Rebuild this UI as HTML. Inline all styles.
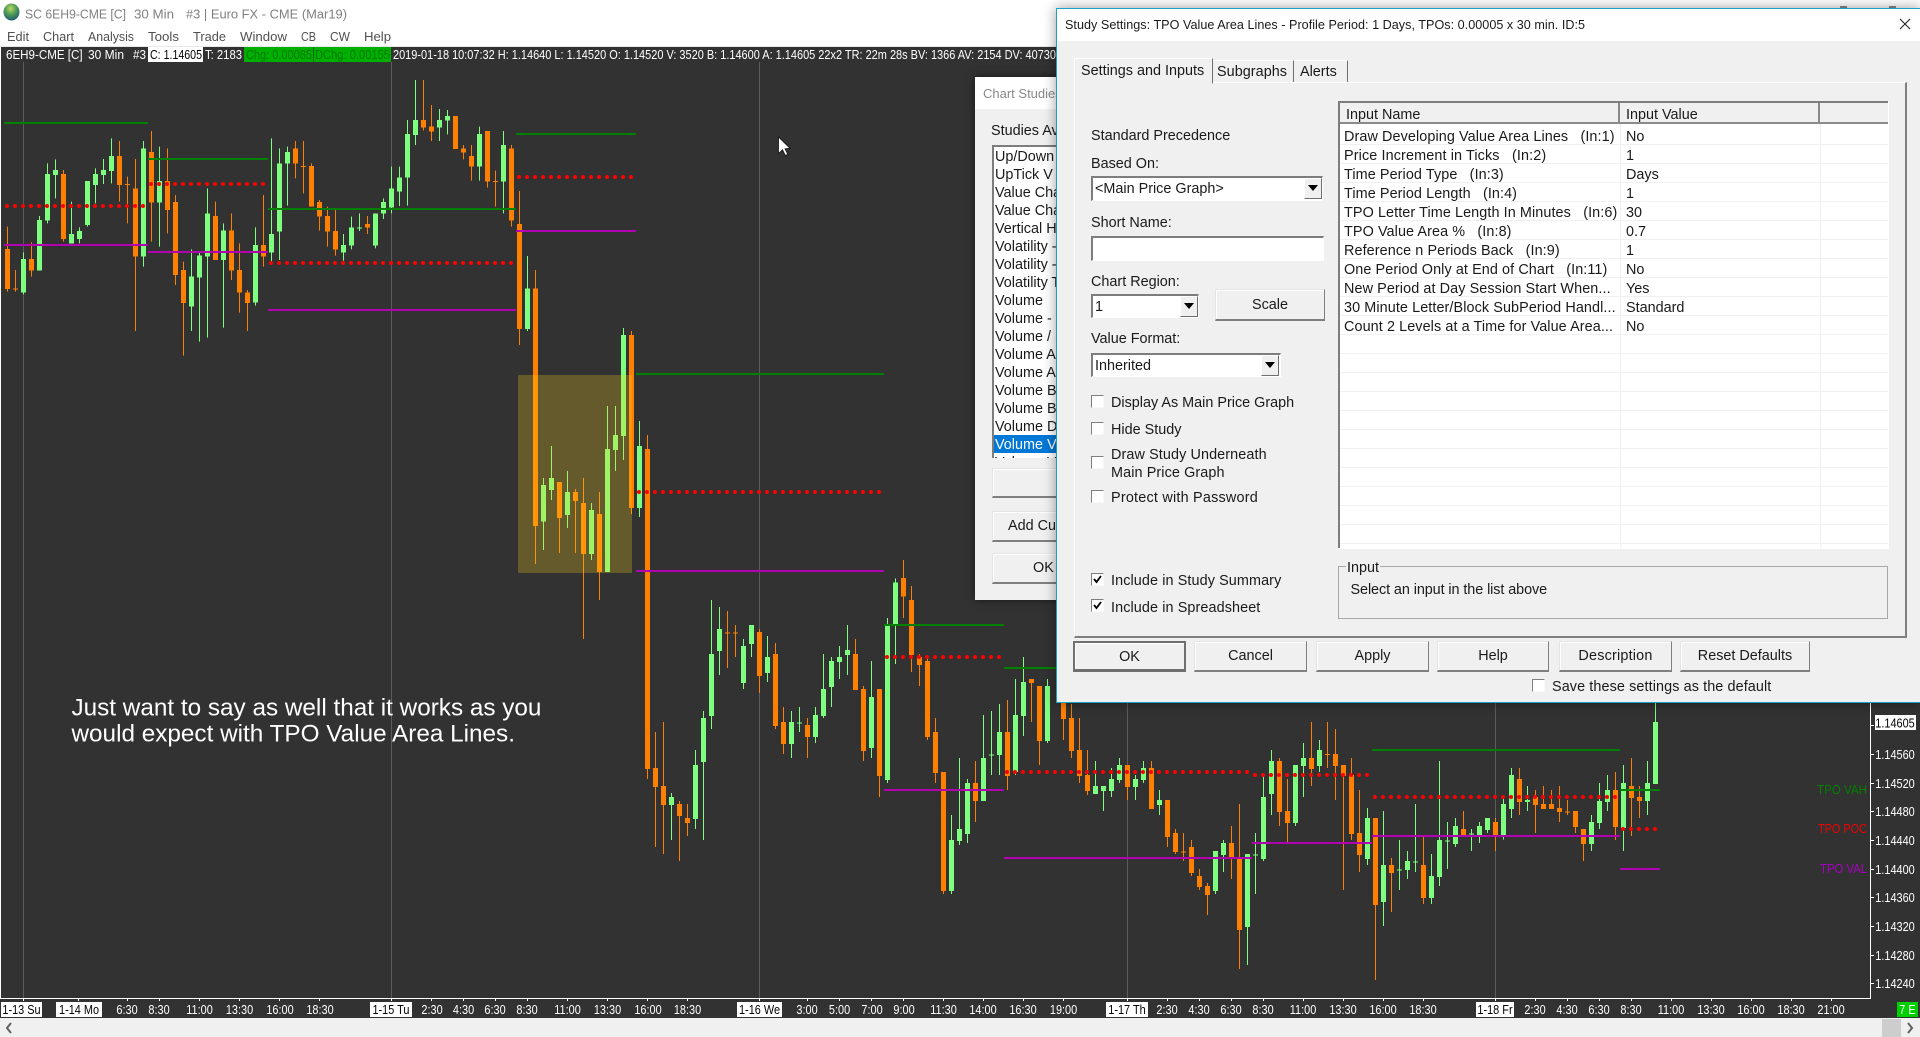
<!DOCTYPE html>
<html><head><meta charset="utf-8"><title>Study Settings</title>
<style>
html,body{margin:0;padding:0;width:1920px;height:1037px;overflow:hidden;background:#fff;font-family:"Liberation Sans",Arial,sans-serif}
svg{position:absolute;left:0;top:0}
svg text{font-family:"Liberation Sans",Arial,sans-serif;font-size:13px;white-space:pre}
.t{fill:#fff;text-anchor:middle;transform-box:fill-box;transform-origin:center;transform:scaleX(.84)}
.k{fill:#000}
.a{position:absolute;white-space:nowrap;font-size:14.4px;line-height:16px;color:#1a1a1a;margin-top:1px}
.r{letter-spacing:.09px}
.b{position:absolute;box-sizing:border-box}
.btn{position:absolute;box-sizing:border-box;background:#f0f0f0;border:1px solid;border-color:#e4e4e4 #7f7f7f #7f7f7f #e4e4e4;border-bottom-width:2px;text-align:center;font-size:14.4px;color:#1a1a1a;line-height:29px;box-shadow:inset 1px 1px 0 #fff}
.in{position:absolute;box-sizing:border-box;background:#fff;border-style:solid;border-width:2px 1px 1px 2px;border-color:#7d7d7d #fff #fff #7d7d7d;font-size:14.4px;line-height:22px;padding-left:2px;color:#1a1a1a}
.dd{position:absolute;box-sizing:border-box;background:#f0f0f0;border:1px solid;border-color:#fff #6f6f6f #6f6f6f #fff;width:18px;height:21px}
.dd:after{content:"";position:absolute;left:3px;top:6px;border:5px solid transparent;border-top:6px solid #000;border-bottom:0}
.cb{position:absolute;box-sizing:border-box;width:13px;height:13px;background:#fff;border-style:solid;border-width:1px;border-color:#7f7f7f #f8f8f8 #f8f8f8 #7f7f7f}
.li{position:absolute;left:1px;margin-top:1px;white-space:nowrap;font-size:14.4px;line-height:18px;color:#1a1a1a}
</style></head><body>
<svg width="1920" height="1037" viewBox="0 0 1920 1037">
<rect width="1920" height="1037" fill="#fff"/>
<rect x="0" y="46" width="1920" height="1" fill="#e8e8e8"/>
<rect x="0" y="47" width="1920" height="971" fill="#323232"/>
<rect x="0" y="47" width="1" height="952" fill="#fff"/>
<rect x="0" y="1018" width="1920" height="19" fill="#f0f0f0"/>
<defs><radialGradient id="g" cx=".45" cy=".3" r=".8"><stop offset="0" stop-color="#b8d860"/><stop offset=".45" stop-color="#4e9a58"/><stop offset="1" stop-color="#124a78"/></radialGradient></defs>
<ellipse cx="11.5" cy="12" rx="8" ry="8.5" fill="url(#g)"/>
<g fill="#808080">
<text x="25" y="18.5" textLength="101" lengthAdjust="spacingAndGlyphs">SC 6EH9-CME [C]</text>
<text x="134" y="18.5" textLength="40" lengthAdjust="spacingAndGlyphs">30 Min</text>
<text x="186" y="18.5" textLength="161" lengthAdjust="spacingAndGlyphs">#3 | Euro FX - CME (Mar19)</text>
</g>
<g fill="#505050">
<text x="7" y="41" textLength="22" lengthAdjust="spacingAndGlyphs">Edit</text>
<text x="43" y="41" textLength="31" lengthAdjust="spacingAndGlyphs">Chart</text>
<text x="88" y="41" textLength="46" lengthAdjust="spacingAndGlyphs">Analysis</text>
<text x="148" y="41" textLength="31" lengthAdjust="spacingAndGlyphs">Tools</text>
<text x="193" y="41" textLength="33" lengthAdjust="spacingAndGlyphs">Trade</text>
<text x="240" y="41" textLength="47" lengthAdjust="spacingAndGlyphs">Window</text>
<text x="301" y="41" textLength="15" lengthAdjust="spacingAndGlyphs">CB</text>
<text x="330" y="41" textLength="20" lengthAdjust="spacingAndGlyphs">CW</text>
<text x="364" y="41" textLength="27" lengthAdjust="spacingAndGlyphs">Help</text>
</g>
<rect x="1840" y="6" width="7" height="2" fill="#8a8a8a"/><rect x="1889" y="6" width="7" height="2" fill="#8a8a8a"/>
<!-- info bar -->
<rect x="148" y="47" width="55" height="15" fill="#fff"/>
<rect x="244" y="47" width="147" height="15" fill="#00b000"/>
<rect x="313" y="47" width="1" height="15" fill="#006000"/>
<g fill="#fff">
<text x="6" y="59" textLength="76.6" lengthAdjust="spacingAndGlyphs">6EH9-CME [C]</text>
<text x="88" y="59" textLength="36" lengthAdjust="spacingAndGlyphs">30 Min</text>
<text x="133" y="59" textLength="13" lengthAdjust="spacingAndGlyphs">#3</text>
<text x="150" y="59" textLength="52" lengthAdjust="spacingAndGlyphs" fill="#000">C: 1.14605</text>
<text x="205" y="59" textLength="37" lengthAdjust="spacingAndGlyphs">T: 2183</text>
<text x="246" y="59" textLength="66" lengthAdjust="spacingAndGlyphs" fill="#007800">Chg: 0.00085</text>
<text x="315" y="59" textLength="75" lengthAdjust="spacingAndGlyphs" fill="#007800">DChg: 0.00155</text>
<text x="393" y="59" textLength="663" lengthAdjust="spacingAndGlyphs">2019-01-18 10:07:32 H: 1.14640 L: 1.14520 O: 1.14520 V: 3520 B: 1.14600 A: 1.14605 22x2 TR: 22m 28s BV: 1366 AV: 2154 DV: 40730</text>
</g>
<!-- grid -->
<path d="M23.5 62V998M391.5 62V998M759.5 62V998M1127.5 62V998M1495.5 62V998" stroke="#5c5c5c" stroke-width="1" fill="none"/>
<!-- candles: x real, y in 3x units -->
<g transform="scale(1,.333333)" fill="none" shape-rendering="crispEdges">
<path stroke="#7fff7f" stroke-width="1" d="M23.5 757V883M39.5 648V812M47.5 490V670M55.5 478V595M71.5 605V730M79.5 682V730M87.5 543V680M95.5 505V610M103.5 477V552M111.5 415V550M143.5 423V800M159.5 440V740M191.5 748V993M199.5 755V1025M207.5 565V1013M223.5 670V983M255.5 682V917M271.5 415V785M279.5 445V780M287.5 440V617M343.5 702V782M351.5 650V748M359.5 640V693M375.5 640V745M383.5 595V657M391.5 500V640M399.5 500V618M407.5 360V617M415.5 240V435M439.5 327V423M447.5 330V403M479.5 380V542M503.5 393V640M527.5 768V993M543.5 1434V1650M551.5 1338V1500M567.5 1413V1584M591.5 1509V1680M607.5 1218V1716M615.5 1218V1413M623.5 984V1380M639.5 1263V1551M671.5 2379V2520M695.5 2250V2487M703.5 2133V2520M711.5 1800V2187M719.5 1821V2025M743.5 1917V2067M751.5 1875V1971M767.5 1908V2046M791.5 2133V2274M799.5 2121V2196M815.5 2121V2229M823.5 1962V2154M831.5 1971V2121M839.5 1938V2037M847.5 1875V2025M871.5 1983V2274M887.5 1854V2349M895.5 1735V1992M951.5 2445V2682M959.5 2274V2535M967.5 2337V2529M983.5 2145V2403M991.5 2133V2325M999.5 2112V2325M1015.5 2037V2325M1023.5 1971V2208M1047.5 2037V2229M1095.5 2283V2382M1103.5 2358V2433M1111.5 2304V2391M1119.5 2274V2349M1135.5 2325V2400M1143.5 2283V2349M1159.5 2370V2445M1215.5 2553V2682M1223.5 2520V2616M1247.5 2562V2895M1255.5 2499V2682M1263.5 2328V2583M1271.5 2250V2445M1295.5 2295V2478M1303.5 2229V2391M1319.5 2220V2316M1367.5 2424V2595M1383.5 2433V2778M1399.5 2520V2670M1407.5 2553V2637M1415.5 2412V2616M1431.5 2562V2712M1439.5 2283V2658M1447.5 2466V2607M1455.5 2454V2541M1471.5 2487V2553M1479.5 2466V2529M1487.5 2454V2499M1503.5 2394V2519M1511.5 2304V2454M1527.5 2358V2433M1591.5 2445V2553M1599.5 2349V2487M1607.5 2325V2433M1623.5 2295V2553M1647.5 2283V2445M1655.5 2109V2352"/>
<path stroke="#7fff7f" stroke-width="5" d="M23.5 777V877M39.5 660V812M47.5 522V662M55.5 510V525M71.5 702V730M79.5 693V717M87.5 543V675M95.5 522V555M103.5 510V525M111.5 468V513M143.5 445V770M159.5 543V608M191.5 830V920M199.5 767V833M207.5 640V770M223.5 692V780M255.5 735V908M271.5 702V758M279.5 490V695M287.5 456V490M343.5 735V758M351.5 682V737M359.5 682V685M375.5 640V737M383.5 606V640M391.5 565V622M399.5 532V575M407.5 402V533M415.5 360V405M439.5 360V383M447.5 348V362M479.5 402V500M503.5 435V545M527.5 865V987M543.5 1455V1565M551.5 1434V1470M567.5 1476V1545M591.5 1530V1662M607.5 1347V1716M615.5 1305V1350M623.5 1005V1308M639.5 1338V1524M671.5 2391V2415M695.5 2295V2457M703.5 2154V2286M711.5 1962V2148M719.5 1887V1953M743.5 1938V2049M751.5 1875V1932M767.5 1971V2019M791.5 2166V2232M799.5 2167V2170M815.5 2145V2211M823.5 2067V2148M831.5 1983V2061M839.5 1971V1986M847.5 1950V1965M871.5 2091V2244M887.5 1878V2340M895.5 1747V1872M951.5 2520V2673M959.5 2487V2523M967.5 2349V2502M983.5 2274V2403M991.5 2263V2266M999.5 2196V2265M1015.5 2145V2316M1023.5 2046V2148M1047.5 2058V2223M1095.5 2358V2382M1103.5 2358V2373M1111.5 2337V2373M1119.5 2295V2340M1135.5 2337V2361M1143.5 2304V2340M1159.5 2400V2415M1215.5 2553V2673M1223.5 2529V2565M1247.5 2562V2781M1255.5 2563V2566M1263.5 2391V2577M1271.5 2283V2382M1295.5 2295V2469M1303.5 2274V2298M1319.5 2250V2298M1367.5 2454V2577M1383.5 2595V2706M1399.5 2608V2611M1407.5 2583V2610M1415.5 2584V2587M1431.5 2628V2694M1439.5 2520V2631M1447.5 2521V2524M1455.5 2478V2532M1471.5 2500V2503M1479.5 2478V2508M1487.5 2454V2490M1503.5 2412V2508M1511.5 2325V2427M1527.5 2400V2406M1591.5 2466V2532M1599.5 2403V2469M1607.5 2370V2406M1623.5 2349V2484M1647.5 2349V2403M1655.5 2166V2352"/>
<path stroke="#ff8000" stroke-width="1" d="M7.5 680V875M15.5 810V875M31.5 727V830M63.5 510V725M119.5 423V605M127.5 530V670M135.5 477V993M151.5 393V725M167.5 445V700M175.5 585V855M183.5 785V1067M215.5 605V780M231.5 640V840M239.5 730V938M247.5 870V993M263.5 585V800M295.5 423V535M303.5 423V580M311.5 490V620M319.5 600V692M327.5 620V740M335.5 630V767M367.5 648V702M423.5 240V392M431.5 315V423M455.5 348V447M463.5 435V478M471.5 435V542M487.5 393V563M495.5 512V620M511.5 435V680M519.5 573V1035M535.5 810V1692M559.5 1446V1659M575.5 1467V1659M583.5 1434V1917M599.5 1476V1800M631.5 993V1542M647.5 1305V2337M655.5 2196V2541M663.5 2166V2562M679.5 2403V2583M687.5 2412V2508M727.5 1833V2004M735.5 1875V1971M759.5 1887V2079M775.5 1929V2187M783.5 2121V2262M807.5 2154V2274M855.5 1917V2070M863.5 2058V2283M879.5 2067V2391M903.5 1680V1854M911.5 1758V2016M919.5 1962V2058M927.5 1977V2220M935.5 2154V2349M943.5 2316V2682M975.5 2283V2466M1007.5 2100V2370M1031.5 2037V2166M1039.5 2058V2295M1063.5 2109V2220M1071.5 2112V2274M1079.5 2154V2349M1087.5 2250V2385M1127.5 2295V2400M1151.5 2283V2427M1167.5 2400V2541M1175.5 2487V2562M1183.5 2499V2583M1191.5 2520V2628M1199.5 2607V2670M1207.5 2649V2745M1231.5 2478V2637M1239.5 2412V2907M1279.5 2274V2478M1287.5 2337V2526M1311.5 2166V2358M1327.5 2166V2304M1335.5 2187V2400M1343.5 2295V2670M1351.5 2274V2520M1359.5 2370V2616M1375.5 2454V2940M1391.5 2574V2736M1423.5 2511V2712M1463.5 2433V2508M1495.5 2454V2553M1519.5 2304V2445M1535.5 2370V2499M1543.5 2358V2427M1551.5 2370V2427M1559.5 2358V2466M1567.5 2400V2445M1575.5 2433V2499M1583.5 2487V2583M1615.5 2316V2520M1631.5 2274V2508M1639.5 2358V2454"/>
<path stroke="#ff8000" stroke-width="5" d="M7.5 747V867M15.5 865V868M31.5 777V812M63.5 522V717M119.5 468V555M127.5 552V555M135.5 565V770M151.5 456V608M167.5 543V630M175.5 606V825M183.5 810V909M215.5 648V780M231.5 692V812M239.5 810V878M247.5 877V909M263.5 735V770M295.5 445V490M303.5 498V501M311.5 498V620M319.5 606V650M327.5 648V695M335.5 693V748M367.5 672V683M423.5 360V383M431.5 380V395M455.5 348V447M463.5 445V458M471.5 468V500M487.5 393V545M495.5 543V546M511.5 445V662M519.5 672V987M535.5 865V1578M559.5 1446V1554M575.5 1476V1503M583.5 1509V1662M599.5 1542V1716M631.5 1005V1524M647.5 1347V2307M655.5 2304V2361M663.5 2358V2415M679.5 2412V2448M687.5 2454V2469M727.5 1897V1900M735.5 1897V1900M759.5 1896V2028M775.5 1962V2178M783.5 2166V2232M807.5 2175V2211M855.5 1962V2070M863.5 2067V2253M879.5 2067V2328M903.5 1734V1790M911.5 1800V1965M919.5 1971V1995M927.5 1983V2211M935.5 2196V2319M943.5 2316V2673M975.5 2349V2403M1007.5 2196V2328M1031.5 2037V2049M1039.5 2058V2223M1063.5 2109V2157M1071.5 2154V2253M1079.5 2250V2328M1087.5 2325V2373M1127.5 2295V2361M1151.5 2304V2427M1167.5 2400V2511M1175.5 2499V2556M1183.5 2554V2557M1191.5 2541V2619M1199.5 2628V2661M1207.5 2658V2685M1231.5 2529V2574M1239.5 2574V2790M1279.5 2283V2436M1287.5 2433V2469M1311.5 2274V2307M1327.5 2262V2265M1335.5 2262V2298M1343.5 2295V2328M1351.5 2325V2502M1359.5 2499V2565M1375.5 2454V2715M1391.5 2595V2619M1423.5 2595V2694M1463.5 2487V2508M1495.5 2466V2508M1519.5 2337V2406M1535.5 2391V2415M1543.5 2412V2427M1551.5 2412V2427M1559.5 2424V2436M1567.5 2434V2437M1575.5 2433V2481M1583.5 2487V2532M1615.5 2370V2481M1631.5 2358V2394M1639.5 2391V2403"/>
</g>
<rect x="518" y="375" width="114" height="198" fill="#ffd21a" fill-opacity=".25"/>
<!-- study lines -->
<g fill="none" stroke-width="2" shape-rendering="crispEdges">
<path stroke="#008000" d="M4 123H148M148 159H268M268 209H516M516 134H636M636 374H884M884 625H1004M1004 668H1100M1372 750H1620M1620 790H1660"/>
<path stroke="#b000b0" d="M4 245H148M148 252H268M268 310H516M516 231H636M636 571H884M884 790H1004M1004 858H1252M1252 843H1372M1372 836H1620M1620 869H1660"/>
</g>
<path fill="none" stroke="#f00" stroke-width="4" stroke-linecap="round" stroke-dasharray="0 8" d="M7 206H144M151 184H264M271 263H512M519 177H632M639 492H880M887 657H1000M1007 772H1248M1255 775H1368M1375 797H1616M1623 829H1656"/>
<!-- text annotation -->
<text x="71.5" y="715.5" style="font-size:24.3px" fill="#fff">Just want to say as well that it works as you</text>
<text x="71.5" y="741.5" style="font-size:24.3px" fill="#fff">would expect with TPO Value Area Lines.</text>
<!-- cursor -->
<path d="M778.5 137V153.5L782.5 149.8L785.3 155.5L787.8 154.3L785 148.8L790 148.3Z" fill="#fff" stroke="#111" stroke-width=".8"/>
<!-- axes -->
<path d="M0 998.5H1871M1870.5 47V999" stroke="#fff" stroke-width="1" fill="none"/>
<path d="M23.5 998v3M78.5 998v3M127.5 998v3M159.5 998v3M199.5 998v3M239.5 998v3M279.5 998v3M319.5 998v3M391.5 998v3M431.5 998v3M463.5 998v3M495.5 998v3M527.5 998v3M567.5 998v3M607.5 998v3M647.5 998v3M687.5 998v3M759.5 998v3M807.5 998v3M839.5 998v3M871.5 998v3M903.5 998v3M943.5 998v3M983.5 998v3M1023.5 998v3M1063.5 998v3M1127.5 998v3M1167.5 998v3M1199.5 998v3M1231.5 998v3M1263.5 998v3M1303.5 998v3M1343.5 998v3M1383.5 998v3M1423.5 998v3M1495.5 998v3M1535.5 998v3M1567.5 998v3M1599.5 998v3M1631.5 998v3M1671.5 998v3M1711.5 998v3M1751.5 998v3M1791.5 998v3M1831.5 998v3M1871 725.5h3M1871 754.5h3M1871 783.5h3M1871 811.5h3M1871 840.5h3M1871 869.5h3M1871 897.5h3M1871 926.5h3M1871 955.5h3M1871 983.5h3" stroke="#fff" stroke-width="1" fill="none"/>
<g fill="#fff">
<rect x="1" y="1002" width="41" height="15"/><rect x="56" y="1002" width="46" height="15"/><rect x="370" y="1002" width="42" height="15"/><rect x="737" y="1002" width="45" height="15"/><rect x="1106" y="1002" width="42" height="15"/><rect x="1476" y="1002" width="38" height="15"/><rect x="1875" y="715" width="41" height="15"/>
</g>
<rect x="1897" y="1002" width="21" height="15" fill="#00d000"/>
<text class="t k" x="21.5" y="1014">1-13 Su</text><text class="t k" x="79" y="1014">1-14 Mo</text><text class="t k" x="391" y="1014">1-15 Tu</text><text class="t k" x="759.5" y="1014">1-16 We</text><text class="t k" x="1127" y="1014">1-17 Th</text><text class="t k" x="1495" y="1014">1-18 Fr</text>
<text class="t" x="127" y="1014">6:30</text><text class="t" x="159" y="1014">8:30</text><text class="t" x="199.5" y="1014">11:00</text><text class="t" x="239.5" y="1014">13:30</text><text class="t" x="280" y="1014">16:00</text><text class="t" x="320" y="1014">18:30</text>
<text class="t" x="432" y="1014">2:30</text><text class="t" x="463.5" y="1014">4:30</text><text class="t" x="495" y="1014">6:30</text><text class="t" x="527" y="1014">8:30</text><text class="t" x="567.5" y="1014">11:00</text><text class="t" x="607.5" y="1014">13:30</text><text class="t" x="648" y="1014">16:00</text><text class="t" x="687.5" y="1014">18:30</text>
<text class="t" x="807" y="1014">3:00</text><text class="t" x="839.5" y="1014">5:00</text><text class="t" x="872" y="1014">7:00</text><text class="t" x="904" y="1014">9:00</text><text class="t" x="943.5" y="1014">11:30</text><text class="t" x="983" y="1014">14:00</text><text class="t" x="1023" y="1014">16:30</text><text class="t" x="1063.5" y="1014">19:00</text>
<text class="t" x="1167" y="1014">2:30</text><text class="t" x="1199" y="1014">4:30</text><text class="t" x="1231" y="1014">6:30</text><text class="t" x="1263" y="1014">8:30</text><text class="t" x="1303" y="1014">11:00</text><text class="t" x="1343" y="1014">13:30</text><text class="t" x="1383" y="1014">16:00</text><text class="t" x="1423" y="1014">18:30</text>
<text class="t" x="1535" y="1014">2:30</text><text class="t" x="1567" y="1014">4:30</text><text class="t" x="1599" y="1014">6:30</text><text class="t" x="1631" y="1014">8:30</text><text class="t" x="1671" y="1014">11:00</text><text class="t" x="1711" y="1014">13:30</text><text class="t" x="1751" y="1014">16:00</text><text class="t" x="1791" y="1014">18:30</text><text class="t" x="1831" y="1014">21:00</text>
<text class="t" x="1907.5" y="1014">7 E</text>
<text class="t k" x="1895" y="727.5">1.14605</text><text class="t" x="1895" y="759">1.14560</text><text class="t" x="1895" y="788">1.14520</text><text class="t" x="1895" y="816">1.14480</text><text class="t" x="1895" y="845">1.14440</text><text class="t" x="1895" y="874">1.14400</text><text class="t" x="1895" y="902">1.14360</text><text class="t" x="1895" y="931">1.14320</text><text class="t" x="1895" y="960">1.14280</text><text class="t" x="1895" y="988">1.14240</text>
<text x="1817" y="794" textLength="50" lengthAdjust="spacingAndGlyphs" fill="#008000">TPO VAH</text>
<text x="1818" y="833" textLength="49" lengthAdjust="spacingAndGlyphs" fill="#f00000">TPO POC</text>
<text x="1820" y="873" textLength="47" lengthAdjust="spacingAndGlyphs" fill="#a800c0">TPO VAL</text>
<!-- scroll bar -->
<rect x="1882" y="1019" width="19" height="18" fill="#cdcdcd"/>
<path d="M1908 1023l4 5-4 5" fill="none" stroke="#606060" stroke-width="2"/>
<path d="M11 1023l-4 5 4 5" fill="none" stroke="#606060" stroke-width="2"/>
</svg>

<!-- Chart Studies dialog behind -->
<div class="b" style="left:975px;top:77px;width:120px;height:523px;background:#f0f0f0;box-shadow:0 0 8px rgba(0,0,0,.55)">
<div class="b" style="left:0;top:0;width:100%;height:32px;background:#fff"></div>
</div>
<div class="a" style="left:983px;top:85px;color:#8a8a8a;font-size:13px">Chart Studies</div>
<div class="a" style="left:991px;top:122px">Studies Available</div>
<div class="b" style="left:992px;top:145px;width:90px;height:313px;background:#fff;border-left:2px solid #7d7d7d;border-top:2px solid #7d7d7d;overflow:hidden">
<div class="li" style="top:0">Up/Down</div><div class="li" style="top:18px">UpTick V</div><div class="li" style="top:36px">Value Cha</div><div class="li" style="top:54px">Value Cha</div><div class="li" style="top:72px">Vertical H</div><div class="li" style="top:90px">Volatility -</div><div class="li" style="top:108px">Volatility -</div><div class="li" style="top:126px">Volatility T</div><div class="li" style="top:144px">Volume</div><div class="li" style="top:162px">Volume -</div><div class="li" style="top:180px">Volume /</div><div class="li" style="top:198px">Volume A</div><div class="li" style="top:216px">Volume A</div><div class="li" style="top:234px">Volume B</div><div class="li" style="top:252px">Volume B</div><div class="li" style="top:270px">Volume D</div>
<div class="b" style="left:0;top:288px;width:100%;height:18px;background:#0078d7"></div>
<div class="li" style="top:288px;color:#fff">Volume V</div><div class="li" style="top:306px">Volume V</div>
</div>
<div class="btn" style="left:992px;top:468px;width:100px;height:30px"></div>
<div class="btn" style="left:992px;top:511px;width:100px;height:31px;text-align:left;padding-left:15px">Add Custom</div>
<div class="btn" style="left:992px;top:553px;width:100px;height:31px;text-align:left;padding-left:40px">OK</div>

<!-- Study Settings dialog -->
<div class="b" style="left:1056px;top:8px;width:864px;height:695px;background:#f0f0f0;border:1px solid #17a2c4;border-right:0;box-shadow:0 0 12px rgba(0,0,0,.4)">
<div class="b" style="left:0;top:0;width:100%;height:32px;background:#fff"></div>
</div>
<div class="a" style="left:1065px;top:16px;font-size:12.6px;letter-spacing:.03px">Study Settings: TPO Value Area Lines - Profile Period: 1 Days, TPOs: 0.00005 x 30 min. ID:5</div>
<svg style="left:1899px;top:18px" width="12" height="12"><path d="M1 1L11 11M11 1L1 11" stroke="#222" stroke-width="1.1"/></svg>

<!-- tab pane -->
<div class="b" style="left:1074px;top:82px;width:833px;height:556px;border:1px solid;border-color:#fff #7f7f7f #7f7f7f #fff;border-width:1px 2px 2px 1px"></div>
<div class="b" style="left:1074px;top:58px;width:139px;height:26px;background:#f0f0f0;border:1px solid;border-color:#fff #6f6f6f transparent #fff"></div>
<div class="a" style="left:1081px;top:62px">Settings and Inputs</div>
<div class="b" style="left:1213px;top:60px;width:81px;height:22px;border-right:1px solid #6f6f6f;border-top:1px solid #fff"></div>
<div class="a" style="left:1217px;top:63px;letter-spacing:.05px">Subgraphs</div>
<div class="b" style="left:1294px;top:60px;width:54px;height:22px;border-right:1px solid #6f6f6f;border-top:1px solid #fff"></div>
<div class="a" style="left:1300px;top:63px">Alerts</div>

<div class="a" style="left:1091px;top:127px">Standard Precedence</div>
<div class="a" style="left:1091px;top:155px">Based On:</div>
<div class="in" style="left:1091px;top:176px;width:232px;height:25px">&lt;Main Price Graph&gt;</div>
<div class="dd" style="left:1304px;top:178px"></div>
<div class="a" style="left:1091px;top:214px">Short Name:</div>
<div class="in" style="left:1091px;top:236px;width:233px;height:25px"></div>
<div class="a" style="left:1091px;top:273px">Chart Region:</div>
<div class="in" style="left:1091px;top:294px;width:108px;height:24px">1</div>
<div class="dd" style="left:1180px;top:296px"></div>
<div class="btn" style="left:1215px;top:289px;width:110px;height:32px;line-height:30px">Scale</div>
<div class="a" style="left:1091px;top:330px">Value Format:</div>
<div class="in" style="left:1091px;top:353px;width:190px;height:24px">Inherited</div>
<div class="dd" style="left:1261px;top:355px"></div>

<div class="cb" style="left:1091px;top:395px"></div><div class="a" style="left:1111px;top:394px">Display As Main Price Graph</div>
<div class="cb" style="left:1091px;top:422px"></div><div class="a" style="left:1111px;top:421px">Hide Study</div>
<div class="cb" style="left:1091px;top:456px"></div><div class="a" style="left:1111px;top:446px;letter-spacing:.1px">Draw Study Underneath</div><div class="a" style="left:1111px;top:464px;letter-spacing:.1px">Main Price Graph</div>
<div class="cb" style="left:1091px;top:490px"></div><div class="a" style="left:1111px;top:489px;letter-spacing:.22px">Protect with Password</div>
<div class="cb" style="left:1091px;top:573px"></div><div class="a" style="left:1111px;top:572px;letter-spacing:.1px">Include in Study Summary</div>
<div class="cb" style="left:1091px;top:599px"></div><div class="a" style="left:1111px;top:599px;letter-spacing:.1px">Include in Spreadsheet</div>
<svg style="left:1091px;top:573px" width="13" height="13"><path d="M3 6l2.5 3L10 3" fill="none" stroke="#000" stroke-width="1.8"/></svg>
<svg style="left:1091px;top:599px" width="13" height="13"><path d="M3 6l2.5 3L10 3" fill="none" stroke="#000" stroke-width="1.8"/></svg>

<!-- list view -->
<div class="b" style="left:1338px;top:101px;width:550px;height:447px;background:#fff;border-left:2px solid #7d7d7d;border-top:2px solid #7d7d7d;box-shadow:1px 1px 0 #fff"></div>
<div class="b" style="left:1340px;top:103px;width:548px;height:21px;background:#f0f0f0;border-bottom:2px solid #8a8a8a"></div>
<div class="b" style="left:1618px;top:103px;width:2px;height:21px;background:#8a8a8a"></div>
<div class="b" style="left:1818px;top:103px;width:2px;height:21px;background:#8a8a8a"></div>
<div class="b" style="left:1340px;top:126px;width:548px;height:422px;background:repeating-linear-gradient(#fff 0 18px,#f0f0f0 18px 19px)"></div>
<div class="b" style="left:1620px;top:124px;width:1px;height:424px;background:#f0f0f0"></div>
<div class="b" style="left:1820px;top:124px;width:1px;height:424px;background:#f0f0f0"></div>
<div class="a" style="left:1346px;top:106px">Input Name</div><div class="a" style="left:1626px;top:106px">Input Value</div>
<div class="a r" style="left:1344px;top:128px">Draw Developing Value Area Lines &nbsp; (In:1)</div><div class="a" style="left:1626px;top:128px">No</div>
<div class="a r" style="left:1344px;top:147px;letter-spacing:.12px">Price Increment in Ticks &nbsp; (In:2)</div><div class="a" style="left:1626px;top:147px">1</div>
<div class="a r" style="left:1344px;top:166px">Time Period Type &nbsp; (In:3)</div><div class="a" style="left:1626px;top:166px">Days</div>
<div class="a r" style="left:1344px;top:185px">Time Period Length &nbsp; (In:4)</div><div class="a" style="left:1626px;top:185px">1</div>
<div class="a r" style="left:1344px;top:204px">TPO Letter Time Length In Minutes &nbsp; (In:6)</div><div class="a" style="left:1626px;top:204px">30</div>
<div class="a r" style="left:1344px;top:223px">TPO Value Area % &nbsp; (In:8)</div><div class="a" style="left:1626px;top:223px">0.7</div>
<div class="a r" style="left:1344px;top:242px">Reference n Periods Back &nbsp; (In:9)</div><div class="a" style="left:1626px;top:242px">1</div>
<div class="a r" style="left:1344px;top:261px">One Period Only at End of Chart &nbsp; (In:11)</div><div class="a" style="left:1626px;top:261px">No</div>
<div class="a r" style="left:1344px;top:280px">New Period at Day Session Start When...</div><div class="a" style="left:1626px;top:280px">Yes</div>
<div class="a r" style="left:1344px;top:299px">30 Minute Letter/Block SubPeriod Handl...</div><div class="a" style="left:1626px;top:299px">Standard</div>
<div class="a r" style="left:1344px;top:318px">Count 2 Levels at a Time for Value Area...</div><div class="a" style="left:1626px;top:318px">No</div>

<!-- input group -->
<div class="b" style="left:1338px;top:566px;width:550px;height:53px;border:1px solid #a8a8a8"></div>
<div class="a" style="left:1346px;top:559px;background:#f0f0f0;padding:0 1px">Input</div>
<div class="a" style="left:1350.5px;top:581px;letter-spacing:-.08px">Select an input in the list above</div>

<!-- buttons -->
<div class="btn" style="left:1073px;top:641px;width:113px;height:31px;border:2px solid #6f6f6f;border-bottom-width:3px;line-height:28px">OK</div>
<div class="btn" style="left:1194px;top:641px;width:113px;height:31px">Cancel</div>
<div class="btn" style="left:1316px;top:641px;width:113px;height:31px">Apply</div>
<div class="btn" style="left:1437px;top:641px;width:112px;height:31px">Help</div>
<div class="btn" style="left:1559px;top:641px;width:113px;height:31px;letter-spacing:.2px">Description</div>
<div class="btn" style="left:1680px;top:641px;width:130px;height:31px">Reset Defaults</div>
<div class="cb" style="left:1532px;top:679px"></div>
<div class="a" style="left:1552px;top:678px;letter-spacing:.1px">Save these settings as the default</div>
</body></html>
